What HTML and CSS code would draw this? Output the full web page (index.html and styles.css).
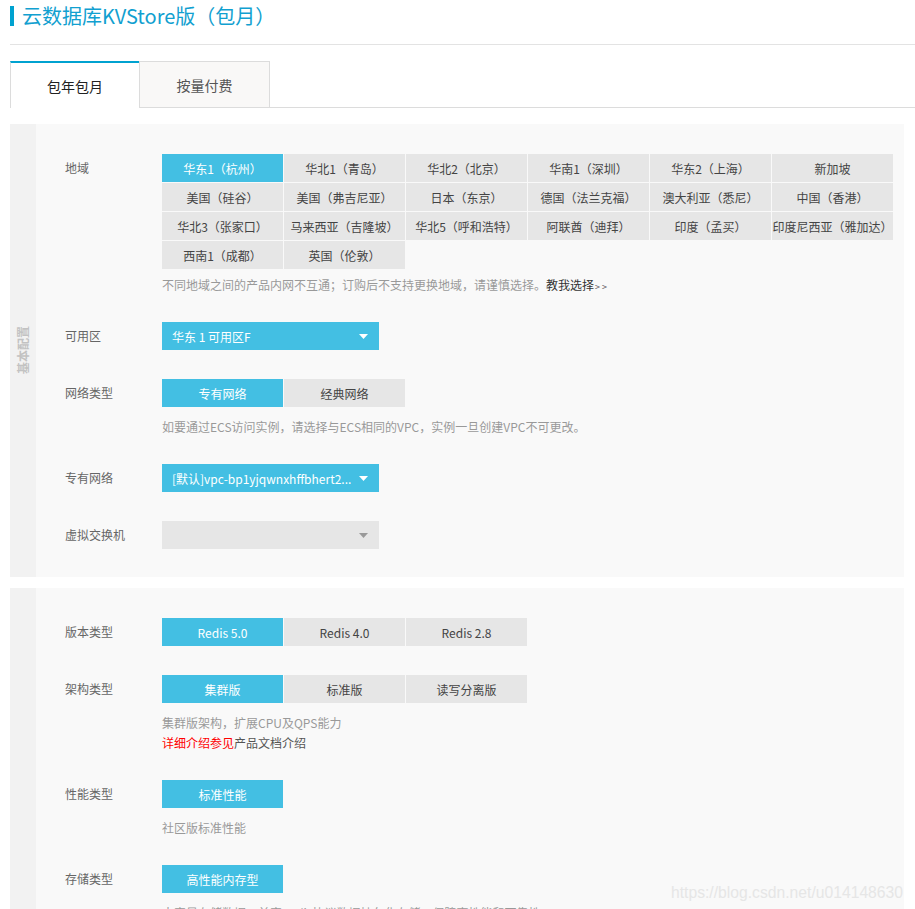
FILE: index.html
```html
<!DOCTYPE html>
<html lang="zh-CN">
<head>
<meta charset="utf-8">
<title>云数据库KVStore版（包月）</title>
<link rel="stylesheet" href="styles.css">
</head>
<body>
<div class="page">
  <h1 class="page-title">云数据库KVStore版（包月）</h1>
  <div class="rule"></div>

  <div class="tabs">
    <div class="tab tab-active">包年包月</div>
    <div class="tab">按量付费</div>
  </div>

  <div class="section">
    <div class="section-side"><span class="side-label">基本配置</span></div>
    <div class="section-body">
      <div class="field field-hinted">
        <div class="field-label">地域</div>
        <div class="field-control">
          <div class="region-grid">
            <div class="opt opt-on">华东1（杭州）</div>
            <div class="opt">华北1（青岛）</div>
            <div class="opt">华北2（北京）</div>
            <div class="opt">华南1（深圳）</div>
            <div class="opt">华东2（上海）</div>
            <div class="opt">新加坡</div>
            <div class="opt">美国（硅谷）</div>
            <div class="opt">美国（弗吉尼亚）</div>
            <div class="opt">日本（东京）</div>
            <div class="opt">德国（法兰克福）</div>
            <div class="opt">澳大利亚（悉尼）</div>
            <div class="opt">中国（香港）</div>
            <div class="opt">华北3（张家口）</div>
            <div class="opt">马来西亚（吉隆坡）</div>
            <div class="opt">华北5（呼和浩特）</div>
            <div class="opt">阿联酋（迪拜）</div>
            <div class="opt">印度（孟买）</div>
            <div class="opt">印度尼西亚（雅加达）</div>
            <div class="opt">西南1（成都）</div>
            <div class="opt">英国（伦敦）</div>
          </div>
          <div class="hint hint-tight">不同地域之间的产品内网不互通；订购后不支持更换地域，请谨慎选择。<span class="hint-link">教我选择</span><span class="hint-arrows">&gt; &gt;</span></div>
        </div>
      </div>

      <div class="field">
        <div class="field-label">可用区</div>
        <div class="field-control">
          <div class="select">
            <span class="select-text">华东 1 可用区F</span>
            <svg class="caret" width="9" height="5" viewBox="0 0 9 5"><path d="M0 0H9L4.5 5Z" fill="#fff"/></svg>
          </div>
        </div>
      </div>

      <div class="field field-hinted">
        <div class="field-label">网络类型</div>
        <div class="field-control">
          <div class="btn-row">
            <div class="opt opt-on">专有网络</div>
            <div class="opt">经典网络</div>
          </div>
          <div class="hint">如要通过ECS访问实例，请选择与ECS相同的VPC，实例一旦创建VPC不可更改。</div>
        </div>
      </div>

      <div class="field">
        <div class="field-label">专有网络</div>
        <div class="field-control">
          <div class="select">
            <span class="select-text">[默认]vpc-bp1yjqwnxhffbhert2...</span>
            <svg class="caret" width="9" height="5" viewBox="0 0 9 5"><path d="M0 0H9L4.5 5Z" fill="#fff"/></svg>
          </div>
        </div>
      </div>

      <div class="field field-last">
        <div class="field-label">虚拟交换机</div>
        <div class="field-control">
          <div class="select select-off">
            <span class="select-text"></span>
            <svg class="caret" width="9" height="5" viewBox="0 0 9 5"><path d="M0 0H9L4.5 5Z" fill="#999"/></svg>
          </div>
        </div>
      </div>
    </div>
  </div>

  <div class="section section-second">
    <div class="section-side"></div>
    <div class="section-body">
      <div class="field">
        <div class="field-label">版本类型</div>
        <div class="field-control">
          <div class="btn-row">
            <div class="opt opt-on">Redis 5.0</div>
            <div class="opt">Redis 4.0</div>
            <div class="opt">Redis 2.8</div>
          </div>
        </div>
      </div>

      <div class="field field-hinted">
        <div class="field-label">架构类型</div>
        <div class="field-control">
          <div class="btn-row">
            <div class="opt opt-on">集群版</div>
            <div class="opt">标准版</div>
            <div class="opt">读写分离版</div>
          </div>
          <div class="hint">集群版架构，扩展CPU及QPS能力</div>
          <div class="hint-line"><span class="hint-red">详细介绍参见</span>产品文档介绍</div>
        </div>
      </div>

      <div class="field field-hinted">
        <div class="field-label">性能类型</div>
        <div class="field-control">
          <div class="btn-row">
            <div class="opt opt-on">标准性能</div>
          </div>
          <div class="hint">社区版标准性能</div>
        </div>
      </div>

      <div class="field field-last">
        <div class="field-label">存储类型</div>
        <div class="field-control">
          <div class="btn-row">
            <div class="opt opt-on">高性能内存型</div>
          </div>
          <div class="hint">大容量存储数据，兼容Redis协议数据持久化存储，保障高性能和可靠性</div>
        </div>
      </div>
    </div>
  </div>

  <div class="watermark">https://blog.csdn.net/u014148630</div>
</div>
</body>
</html>
```

FILE: styles.css
```css
html, body {
  margin: 0;
  padding: 0;
  background: #fff;
}

body {
  font-family: "Microsoft YaHei", "Noto Sans CJK SC", "Noto Sans", sans-serif;
  font-size: 12px;
  color: #333;
}

.page {
  position: relative;
  padding-left: 10px;
}

.page-title {
  margin: 6px 0 0 0;
  height: 20px;
  line-height: 20px;
  font-size: 20px;
  font-weight: normal;
  color: #11a0d0;
  border-left: 4px solid #00a2d0;
  padding-left: 8px;
}

.rule {
  margin-top: 18px;
  height: 1px;
  background: #e3e3e3;
}

.tabs {
  display: flex;
  margin-top: 16px;
  height: 46px;
  border-bottom: 1px solid #dcdcdc;
}

.tab {
  box-sizing: border-box;
  height: 47px;
  width: 131px;
  display: flex;
  align-items: center;
  justify-content: center;
  font-size: 14px;
  color: #555;
  background: #f9f8f7;
  border: 1px solid #dcdcdc;
}

.tab-active {
  width: 129px;
  color: #222;
  background: #fff;
  border: none;
  border-top: 2px solid #00a2d0;
  border-left: 1px solid #dcdcdc;
}

.section {
  display: flex;
  margin-top: 16px;
  margin-right: 11px;
  background: #f9f9f9;
}

.section-second {
  margin-top: 11px;
}

.section-side {
  width: 26px;
  flex: none;
  background: #f2f2f2;
  display: flex;
  align-items: center;
  justify-content: center;
}

.side-label {
  writing-mode: vertical-rl;
  text-orientation: sideways;
  transform: rotate(180deg);
  font-size: 12px;
  line-height: 12px;
  font-weight: bold;
  color: #c2c2c2;
}

.section-body {
  flex: 1;
  padding: 30px 0 28px 29px;
}

.field {
  display: flex;
  align-items: flex-start;
  margin-bottom: 29px;
}

.field-hinted {
  margin-bottom: 27px;
}

.field-last {
  margin-bottom: 0;
}

.field-label {
  width: 97px;
  flex: none;
  line-height: 28px;
  color: #666;
}

.field-control {
  flex: 1;
}

.region-grid {
  display: grid;
  grid-template-columns: repeat(6, 121px);
  grid-auto-rows: 28px;
  gap: 1px;
}

.btn-row {
  display: flex;
  gap: 1px;
}

.opt {
  box-sizing: border-box;
  width: 121px;
  height: 28px;
  display: flex;
  align-items: center;
  justify-content: center;
  background: #e6e6e6;
  color: #444;
  white-space: nowrap;
  overflow: hidden;
}

.opt-on {
  background: #43bfe3;
  color: #fff;
}

.hint {
  margin-top: 10px;
  height: 20px;
  line-height: 20px;
  color: #999;
  white-space: nowrap;
}

.hint-tight {
  margin-top: 6px;
}

.hint-link {
  color: #333;
}

.hint-arrows {
  color: #555;
  font-size: 9px;
  line-height: 1;
  padding-left: 1px;
}

.hint-line {
  height: 20px;
  line-height: 20px;
  color: #555;
}

.hint-red {
  color: #f00;
}

.select {
  box-sizing: border-box;
  width: 217px;
  height: 28px;
  padding: 0 11px 0 10px;
  background: #43bfe3;
  color: #fff;
  display: flex;
  align-items: center;
  justify-content: space-between;
}

.select-text {
  white-space: nowrap;
  overflow: hidden;
  max-width: 185px;
}

.select-off {
  background: #e6e6e6;
}

.caret {
  flex: none;
  display: block;
}

.watermark {
  position: absolute;
  left: 671px;
  top: 878px;
  font-family: "Liberation Sans", Arial, sans-serif;
  font-size: 15.7px;
  color: #e6e6e6;
  white-space: nowrap;
}
```
